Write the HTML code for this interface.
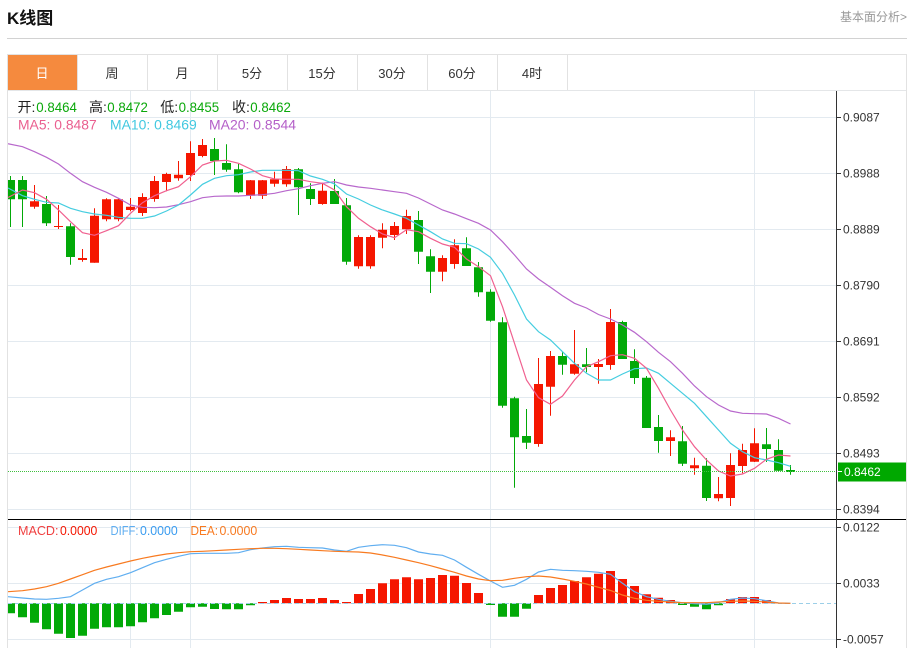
<!DOCTYPE html>
<html><head><meta charset="utf-8"><style>
html,body{margin:0;padding:0;background:#fff;width:911px;height:648px;overflow:hidden}
svg{display:block;font-family:"Liberation Sans","Noto Sans CJK SC",sans-serif}
</style></head><body>
<svg width="911" height="648" viewBox="0 0 911 648" xmlns="http://www.w3.org/2000/svg">
<defs><clipPath id="c"><rect x="8" y="91" width="828" height="557"/></clipPath></defs>
<text x="7" y="24" font-size="17" font-weight="700" fill="#111">K线图</text>
<text x="840" y="21" font-size="12" fill="#999">基本面分析&gt;</text>
<rect x="7" y="38" width="900" height="1" fill="#d2d2d2"/>
<!-- box -->
<rect x="7" y="54" width="900" height="1" fill="#e2e2e2"/>
<rect x="7" y="54" width="1" height="594" fill="#e2e2e2"/>
<rect x="906" y="54" width="1" height="594" fill="#e2e2e2"/>
<rect x="8" y="90" width="898" height="1" fill="#e4e6e8"/>
<rect x="8" y="55" width="69" height="35" fill="#f58a3e"/>
<path d="M77.5 55V90M147.5 55V90M217.5 55V90M287.5 55V90M357.5 55V90M427.5 55V90M497.5 55V90M567.5 55V90" stroke="#e2e2e2" fill="none"/>
<g font-size="13" fill="#333" text-anchor="middle">
<text x="42" y="78" fill="#fff">日</text><text x="112" y="78">周</text><text x="182" y="78">月</text><text x="252" y="78">5分</text><text x="322" y="78">15分</text><text x="392" y="78">30分</text><text x="462" y="78">60分</text><text x="532" y="78">4时</text>
</g>
<!-- grid -->
<path d="M8 117.5H836M8 173.5H836M8 229.5H836M8 285.5H836M8 341.5H836M8 397.5H836M8 453.5H836M8 509.5H836M8 527.5H836M8 583.5H836M8 639.5H836M130.5 91V648M190.5 91V648M490.5 91V648M754.5 91V648" stroke="#e3eaf0" fill="none"/>
<g clip-path="url(#c)">
<!-- green wicks -->
<path stroke="#02a908" fill="none" d="M10.5 176V227M22.5 176V227M46.5 196V226M70.5 223.3V264.7M214.5 138V175M226.5 144.3V171.7M238.5 164V193.3M298.5 168V215M310.5 183.3V205M334.5 179V204M346.5 198V264.7M418.5 211V264M430.5 249.3V293M466.5 237.3V266M478.5 262V296.7M490.5 289.3V321.7M502.5 317.3V407.7M514.5 396.7V487.7M526.5 409V449M562.5 352.3V374.7M586.5 348V372.3M622.5 320.7V359M634.5 349.3V384M646.5 376V428M658.5 415V452.7M682.5 426V466M706.5 458.3V501M766.5 428V462M778.5 439.3V471.3M790.5 465V474.7"/>
<!-- red wicks -->
<path stroke="#f51600" fill="none" d="M34.5 185V208.7M58.5 205V229M82.5 249V261.7M94.5 208.3V262.7M106.5 198.3V221.3M118.5 198.3V221.3M130.5 198V211.3M142.5 193.3V216M154.5 176V201.7M166.5 172.7V191.3M178.5 161V180.7M190.5 141.3V181M202.5 139V157.3M250.5 180V199M262.5 180V199M274.5 171.7V186.7M286.5 166V186.7M322.5 182.7V204.7M358.5 235.3V268.7M370.5 235.3V268.7M382.5 223.3V248.3M394.5 222V240M406.5 209.7V234M442.5 255.3V281.3M454.5 239.3V268.7M538.5 358V446.7M550.5 351V415.7M574.5 330V374.7M598.5 359V383.7M610.5 309V369.7M670.5 430.3V456M694.5 457.7V474.7M718.5 477V501.3M730.5 453.3V506M742.5 443.7V473.3M754.5 428.3V462"/>
<!-- green bodies -->
<path fill="#02a908" d="M6 180h9V199.3h-9zM18 180h9V199.3h-9zM42 204h9V223.3h-9zM66 226.3h9V257h-9zM210 149h9V161h-9zM222 163h9V169.7h-9zM234 169.3h9V192.3h-9zM294 169.3h9V187.3h-9zM306 189h9V199h-9zM330 191h9V204h-9zM342 205.3h9V261.7h-9zM414 220h9V251.7h-9zM426 256.3h9V271.7h-9zM462 248.3h9V266h-9zM474 267.3h9V292.3h-9zM486 291.7h9V320.7h-9zM498 322.3h9V405.7h-9zM510 398.3h9V437.3h-9zM522 436h9V442.7h-9zM558 356h9V364.7h-9zM582 364.3h9V367h-9zM618 322h9V359h-9zM630 361h9V378h-9zM642 377.7h9V428h-9zM654 427h9V441h-9zM678 441.3h9V463.7h-9zM702 465.7h9V498h-9zM762 444.3h9V449h-9zM774 450h9V470.7h-9zM786 470h9V472h-9z"/>
<!-- red bodies -->
<path fill="#f51600" d="M30 201.3h9V206.7h-9zM54 226h9V227h-9zM78 258h9V260h-9zM90 215.7h9V262.7h-9zM102 199.3h9V219.3h-9zM114 199.3h9V219.3h-9zM126 206.7h9V210h-9zM138 197h9V213h-9zM150 181h9V199h-9zM162 174h9V182h-9zM174 174.7h9V178.3h-9zM186 153h9V175h-9zM198 145h9V156h-9zM246 180.3h9V195.7h-9zM258 180.3h9V195.7h-9zM270 179.3h9V183.7h-9zM282 169h9V184.3h-9zM318 190.7h9V204h-9zM354 237h9V266.3h-9zM366 237h9V266.3h-9zM378 229.7h9V237.7h-9zM390 226h9V235h-9zM402 216h9V229.3h-9zM438 258h9V271.7h-9zM450 245.3h9V264h-9zM534 384h9V444h-9zM546 356h9V386.7h-9zM570 364.3h9V373.7h-9zM594 364h9V367h-9zM606 322h9V365h-9zM666 437.3h9V441h-9zM690 465.3h9V468.3h-9zM714 494h9V498.3h-9zM726 465h9V498h-9zM738 450h9V466h-9zM750 443.3h9V461.7h-9z"/>
<!-- MA lines -->
<polyline fill="none" stroke="#b868cc" stroke-width="1.2" points="8,143.7 22.5,146.7 34.5,151.7 46.5,157.3 58.5,164 70.5,173.3 82.5,181.7 94.5,187.3 106.5,192.3 118.5,198.3 130.5,205 142.5,207.3 154.5,207.7 166.5,207 178.5,204.7 190.5,201.7 202.5,197.7 214.5,196.3 226.5,196 238.5,196 250.5,195.3 262.5,194.7 274.5,193.3 286.5,190.7 298.5,188.7 310.5,185.7 322.5,183.3 334.5,181.7 346.5,185 358.5,187 370.5,188.3 382.5,190 394.5,191.7 406.5,193.3 418.5,198 430.5,204 442.5,210 454.5,214 466.5,218.7 478.5,223.3 490.5,230 502.5,241.7 514.5,255 526.5,269 538.5,279 550.5,287.3 562.5,295.7 574.5,303.3 586.5,308 598.5,314.5 610.5,319 622.5,325 634.5,332.3 646.5,341.7 658.5,352.3 670.5,361.7 682.5,373.3 694.5,386 706.5,396.7 718.5,405 730.5,411 742.5,413.3 754.5,413.7 766.5,414 778.5,418.3 790.5,424"/>
<polyline fill="none" stroke="#45cde0" stroke-width="1.2" points="8,188 22.5,195.7 34.5,199.3 46.5,202.3 58.5,203 70.5,208.3 82.5,211.7 94.5,214 106.5,215.3 118.5,217.3 130.5,218.3 142.5,218.3 154.5,216 166.5,211 178.5,205 190.5,195 202.5,184.3 214.5,178.3 226.5,175.7 238.5,174.7 250.5,172 262.5,170.3 274.5,170.3 286.5,170.3 298.5,170.7 310.5,176 322.5,179.3 334.5,184 346.5,194 358.5,199 370.5,205 382.5,210 394.5,214 406.5,218.3 418.5,225 430.5,231.7 442.5,239 454.5,243.3 466.5,243.7 478.5,249 490.5,257.3 502.5,273.3 514.5,295 526.5,319 538.5,331.7 550.5,340 562.5,351.7 574.5,363.3 586.5,373.3 598.5,380 610.5,380 622.5,374 634.5,368.7 646.5,368 658.5,373.3 670.5,383.3 682.5,393.3 694.5,403.3 706.5,416.7 718.5,430 730.5,443.3 742.5,451.7 754.5,457.7 766.5,460 778.5,462.7 790.5,466.3"/>
<polyline fill="none" stroke="#f0608f" stroke-width="1.2" points="8,197.5 22.5,190 34.5,192.7 46.5,199.3 58.5,210 70.5,221.7 82.5,232.7 94.5,235.3 106.5,230.7 118.5,225.7 130.5,213.3 142.5,202.7 154.5,195.7 166.5,190.7 178.5,186.7 190.5,176.7 202.5,165 214.5,161 226.5,160.3 238.5,163.3 250.5,169 262.5,175.7 274.5,179 286.5,179.3 298.5,179.3 310.5,181.7 322.5,183.3 334.5,190 346.5,206.7 358.5,218.3 370.5,226.7 382.5,234 394.5,237.7 406.5,229.7 418.5,231.7 430.5,238.3 442.5,244 454.5,247.3 466.5,259 478.5,266.7 490.5,275.7 502.5,306.7 514.5,343.3 526.5,380 538.5,397.7 550.5,404.3 562.5,396 574.5,380 586.5,366.7 598.5,361.7 610.5,355.7 622.5,354.7 634.5,358.3 646.5,368.3 658.5,388.3 670.5,410 682.5,430 694.5,446.7 706.5,460 718.5,471 730.5,476 742.5,474 754.5,468.3 766.5,459.3 778.5,455 790.5,456"/>
<!-- MACD bars -->
<path fill="#02a908" d="M6 603.3h9V613.3h-9zM18 603.3h9V617.3h-9zM30 603.3h9V622.7h-9zM42 603.3h9V629.3h-9zM54 603.3h9V633.7h-9zM66 603.3h9V638h-9zM78 603.3h9V635.7h-9zM90 603.3h9V628.7h-9zM102 603.3h9V627.3h-9zM114 603.3h9V627.3h-9zM126 603.3h9V626.3h-9zM138 603.3h9V622.3h-9zM150 603.3h9V618.3h-9zM162 603.3h9V615h-9zM174 603.3h9V611.7h-9zM186 603.3h9V607.3h-9zM198 603.3h9V606.7h-9zM210 603.3h9V609h-9zM222 603.3h9V609.3h-9zM234 603.3h9V609.3h-9zM246 603.3h9V605.3h-9zM486 603.3h9V605h-9zM498 603.3h9V616.7h-9zM510 603.3h9V616.7h-9zM522 603.3h9V608.7h-9zM678 603.3h9V605h-9zM690 603.3h9V606.7h-9zM702 603.3h9V609.3h-9zM714 603.3h9V605.3h-9z"/>
<path fill="#f51600" d="M258 602h9V603.3h-9zM270 600h9V603.3h-9zM282 598h9V603.3h-9zM294 599h9V603.3h-9zM306 599h9V603.3h-9zM318 598h9V603.3h-9zM330 600h9V603.3h-9zM342 602h9V603.3h-9zM354 594h9V603.3h-9zM366 589h9V603.3h-9zM378 583.3h9V603.3h-9zM390 579.3h9V603.3h-9zM402 577.3h9V603.3h-9zM414 579.3h9V603.3h-9zM426 578h9V603.3h-9zM438 575h9V603.3h-9zM450 575.7h9V603.3h-9zM462 583h9V603.3h-9zM474 593h9V603.3h-9zM534 595h9V603.3h-9zM546 588h9V603.3h-9zM558 585h9V603.3h-9zM570 581h9V603.3h-9zM582 577.3h9V603.3h-9zM594 573.7h9V603.3h-9zM606 571h9V603.3h-9zM618 579h9V603.3h-9zM630 586h9V603.3h-9zM642 594.3h9V603.3h-9zM654 597.7h9V603.3h-9zM666 600h9V603.3h-9zM726 599h9V603.3h-9zM738 597h9V603.3h-9zM750 597h9V603.3h-9zM762 600h9V603.3h-9zM774 602.7h9V603.3h-9z"/>
<path d="M8 603.5H836" stroke="#9ccfe8" stroke-dasharray="4 3" fill="none"/>
<polyline fill="none" stroke="#60aef0" stroke-width="1.2" points="8,596.7 22.5,598 34.5,599 46.5,599.3 58.5,598.3 70.5,596.7 82.5,590 94.5,583.3 106.5,579.3 118.5,576.7 130.5,572.7 142.5,567.7 154.5,562.7 166.5,559.3 178.5,556.3 190.5,553.7 202.5,553.3 214.5,553.3 226.5,553.3 238.5,552.7 250.5,549.7 262.5,548 274.5,546.7 286.5,546.3 298.5,547.3 310.5,547.7 322.5,548 334.5,550 346.5,551.3 358.5,547.3 370.5,545.7 382.5,544.7 394.5,545.3 406.5,547.7 418.5,552 430.5,554 442.5,555.3 454.5,560 466.5,567.3 478.5,574.3 490.5,581 502.5,587.3 514.5,585.3 526.5,579.3 538.5,572 550.5,569.3 562.5,570.3 574.5,570.7 586.5,571.3 598.5,572.3 610.5,574.3 622.5,583.3 634.5,591.7 646.5,596.7 658.5,599.3 670.5,601.3 682.5,602.7 694.5,603.7 706.5,604.3 718.5,602.7 730.5,599.3 742.5,598 754.5,598.7 766.5,600.7 778.5,603 790.5,603.3"/>
<polyline fill="none" stroke="#f87a20" stroke-width="1.2" points="8,591.7 22.5,590.7 34.5,589 46.5,586.7 58.5,583.3 70.5,579 82.5,574.7 94.5,570.3 106.5,567 118.5,564 130.5,561 142.5,558.3 154.5,556 166.5,554 178.5,552.7 190.5,551.7 202.5,551.3 214.5,550.7 226.5,550 238.5,549.3 250.5,548.7 262.5,548.3 274.5,548.3 286.5,548.7 298.5,549.3 310.5,550 322.5,550.7 334.5,551.3 346.5,551.7 358.5,552 370.5,553 382.5,555 394.5,557.3 406.5,560 418.5,562.7 430.5,565.7 442.5,569 454.5,572.3 466.5,576 478.5,579 490.5,580.7 502.5,580.3 514.5,578.3 526.5,576.7 538.5,576 550.5,577 562.5,579 574.5,581.3 586.5,584 598.5,587.3 610.5,590.5 622.5,595 634.5,598.3 646.5,600.3 658.5,601.3 670.5,602 682.5,602.7 694.5,602.7 706.5,602.7 718.5,602 730.5,601.3 742.5,601 754.5,601.3 766.5,602 778.5,603 790.5,603.3"/>
</g>
<!-- last price dotted -->
<path d="M8 471.5H835" stroke="#40c040" stroke-dasharray="1 1" fill="none"/>
<!-- legends -->
<g font-size="14">
<text x="17.5" y="112" fill="#222">开:</text><text x="36.3" y="112" fill="#0aa80a" textLength="40.6" lengthAdjust="spacingAndGlyphs">0.8464</text>
<text x="89" y="112" fill="#222">高:</text><text x="107.3" y="112" fill="#0aa80a" textLength="40.6" lengthAdjust="spacingAndGlyphs">0.8472</text>
<text x="160.3" y="112" fill="#222">低:</text><text x="178.6" y="112" fill="#0aa80a" textLength="40.6" lengthAdjust="spacingAndGlyphs">0.8455</text>
<text x="232" y="112" fill="#222">收:</text><text x="250.3" y="112" fill="#0aa80a" textLength="40.6" lengthAdjust="spacingAndGlyphs">0.8462</text>
<text x="18" y="129.5" fill="#ea5f8f" textLength="78.7" lengthAdjust="spacingAndGlyphs">MA5: 0.8487</text>
<text x="110" y="129.5" fill="#41c8e0" textLength="86.7" lengthAdjust="spacingAndGlyphs">MA10: 0.8469</text>
<text x="209" y="129.5" fill="#b45fc8" textLength="87" lengthAdjust="spacingAndGlyphs">MA20: 0.8544</text>
</g>
<g font-size="13">
<text x="18" y="535" fill="#f04040" textLength="40.5" lengthAdjust="spacingAndGlyphs">MACD:</text><text x="60" y="535" fill="#f51600" textLength="37.3" lengthAdjust="spacingAndGlyphs">0.0000</text>
<text x="110.5" y="535" fill="#60aef0" textLength="28" lengthAdjust="spacingAndGlyphs">DIFF:</text><text x="140" y="535" fill="#3a9cf0" textLength="37.7" lengthAdjust="spacingAndGlyphs">0.0000</text>
<text x="190.5" y="535" fill="#f87a20" textLength="27.5" lengthAdjust="spacingAndGlyphs">DEA:</text><text x="219.5" y="535" fill="#f87a20" textLength="37.7" lengthAdjust="spacingAndGlyphs">0.0000</text>
</g>
<!-- axis -->
<rect x="8" y="519" width="898" height="1" fill="#000"/>
<rect x="836" y="91" width="1" height="557" fill="#333"/>
<path d="M837 117.5h4M837 173.5h4M837 229.5h4M837 285.5h4M837 341.5h4M837 397.5h4M837 453.5h4M837 509.5h4M837 527.5h4M837 583.5h4M837 639.5h4" stroke="#333" fill="none"/>
<g font-size="12" fill="#333">
<text x="843" y="121.5">0.9087</text><text x="843" y="177.5">0.8988</text><text x="843" y="233.5">0.8889</text><text x="843" y="289.5">0.8790</text><text x="843" y="345.5">0.8691</text><text x="843" y="401.5">0.8592</text><text x="843" y="457.5">0.8493</text><text x="843" y="513.5">0.8394</text>
<text x="843" y="531.5">0.0122</text><text x="843" y="587.5">0.0033</text><text x="843" y="643.5">-0.0057</text>
</g>
<rect x="838" y="462.5" width="68" height="19" fill="#00a800"/>
<rect x="838" y="471" width="4" height="1" fill="#fff"/>
<text x="844" y="476" font-size="12" fill="#fff">0.8462</text>
</svg>
</body></html>
